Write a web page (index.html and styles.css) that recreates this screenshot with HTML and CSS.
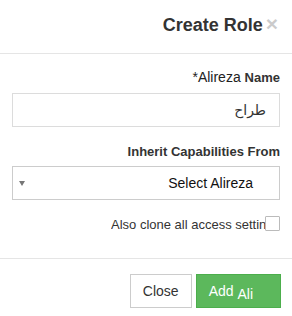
FILE: index.html
```html
<!DOCTYPE html>
<html>
<head>
<meta charset="utf-8">
<link rel="stylesheet" href="styles.css">
</head>
<body>
<div class="modal">
  <div class="modal-header">
    <h4 class="title">Create Role</h4>
    <span class="close">×</span>
  </div>
  <div class="modal-body">
    <div class="label label-name"><span class="req">*Alireza</span> <b>Name</b></div>
    <div class="input" dir="rtl">طراح</div>
    <div class="label label-inherit"><b>Inherit Capabilities From</b></div>
    <div class="select">
      <span class="arrow"></span>
      <span class="select-text">Select Alireza</span>
    </div>
    <div class="check-row">
      <span class="check-text">Also clone all access settings</span>
      <span class="checkbox"></span>
    </div>
  </div>
  <div class="modal-footer">
    <button class="btn btn-default">Close</button>
    <button class="btn btn-success">Add <span class="ali">Ali</span></button>
  </div>
</div>
</body>
</html>
```
FILE: styles.css
```css
html, body {
  margin: 0;
  padding: 0;
  background: #fff;
}
body {
  font-family: "Liberation Sans", Arial, sans-serif;
  font-size: 14px;
  line-height: 20px;
  color: #333;
  width: 292px;
  height: 316px;
  overflow: hidden;
}
.modal {
  width: 292px;
}
.modal-header {
  height: 53px;
  border-bottom: 1px solid #e5e5e5;
  display: flex;
  justify-content: flex-end;
  align-items: flex-start;
  padding: 0 14px 0 0;
  box-sizing: content-box;
}
.title {
  margin: 0;
  font-size: 18px;
  font-weight: bold;
  line-height: 26px;
  padding-top: 12px;
  color: #333;
}
.close {
  font-size: 21px;
  font-weight: bold;
  color: #000;
  opacity: 0.2;
  line-height: 21px;
  padding-top: 13px;
  margin-left: 3px;
}
.modal-body {
  padding: 13px 12px 0 12px;
  height: 191px;
}
.label {
  line-height: 20px;
  text-align: right;
}
.label b {
  font-size: 13px;
  font-weight: bold;
}
.label-name {
  margin-bottom: 5px;
  color: #222;
}
.label-name b {
  color: #333;
}
.req {
  font-size: 14px;
  color: #222;
}
.input {
  height: 32px;
  border: 1px solid #dcdcdc;
  padding: 0 13px;
  line-height: 32px;
  font-family: "DejaVu Sans", sans-serif;
  font-size: 14px;
  color: #333;
  text-align: right;
  margin-bottom: 14px;
}
.label-inherit {
  margin-bottom: 4px;
}
.select {
  height: 32px;
  border: 1px solid #ccc;
  display: flex;
  align-items: center;
  padding: 0 26px 0 6px;
  color: #111;
}
.arrow {
  width: 0;
  height: 0;
  border-style: solid;
  border-width: 5px 3px 0 3px;
  border-color: #777 transparent transparent transparent;
  margin-top: 1px;
}
.select-text {
  margin-left: auto;
  font-size: 14px;
}
.check-row {
  display: flex;
  justify-content: flex-end;
  align-items: center;
  margin-top: 15px;
  height: 16px;
}
.check-text {
  font-size: 13px;
  color: #333;
  width: 154px;
  white-space: nowrap;
  overflow: hidden;
  line-height: 16px;
  margin-top: 3px;
}
.checkbox {
  width: 13px;
  height: 13px;
  border: 1px solid #bbb;
  border-radius: 1px;
  background: #fff;
}
.modal-footer {
  border-top: 1px solid #e5e5e5;
  padding: 15px 11px 0 0;
  display: flex;
  justify-content: flex-end;
  gap: 4px;
}
.btn {
  font-family: "Liberation Sans", Arial, sans-serif;
  font-size: 14px;
  line-height: 20px;
  height: 34px;
  padding: 6px 12px;
  border: 1px solid;
  border-radius: 0;
  margin: 0;
}
.btn-default {
  background: #fff;
  border-color: #ccc;
  color: #333;
}
.btn-success {
  background: #5cb85c;
  border-color: #4cae4c;
  color: #fff;
  padding-right: 27px;
}
.ali {
  vertical-align: -3px;
}
```
